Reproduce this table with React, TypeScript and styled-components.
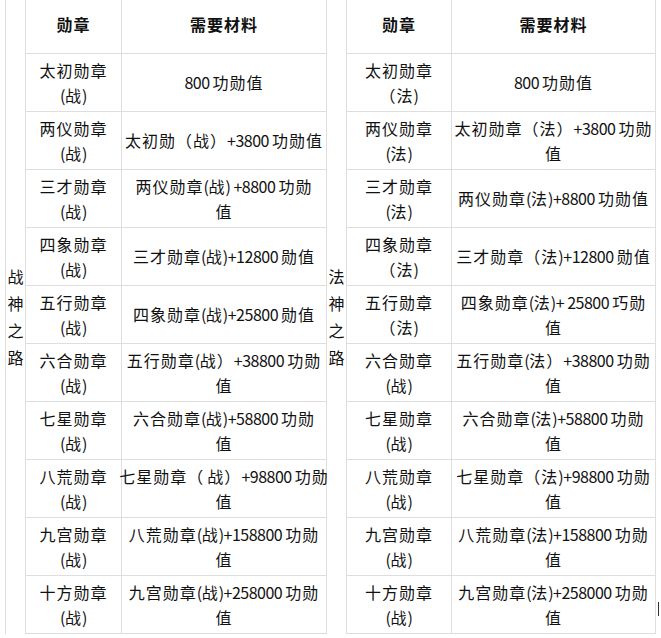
import React from "react";
import styled, { createGlobalStyle } from "styled-components";

const Global = createGlobalStyle`
  html, body { margin: 0; padding: 0; background: #fff; }
  body {
    font-family: "Noto Sans CJK SC", "Noto Sans", sans-serif;
    color: #111;
    overflow: hidden;
  }
`;

const Page = styled.div`
  position: relative;
  width: 661px;
  height: 638px;
  overflow: hidden;
`;

const Grid = styled.div`
  display: grid;
  grid-template-columns: 20px 96px 205px 20px 105px 204px;
  grid-template-rows: 54px repeat(10, 58px);
  width: max-content;
  margin: -1px 0 0 5px;
  border-left: 1px solid #dedede;
  border-top: 1px solid #dedede;
`;

const Cell = styled.div<{ $head?: boolean }>`
  border-right: 1px solid #dedede;
  border-bottom: 1px solid #dedede;
  display: flex;
  align-items: center;
  justify-content: center;
  text-align: center;
  font-size: 16px;
  line-height: 25px;
  letter-spacing: 1px;
  white-space: nowrap;
  font-weight: ${(p) => (p.$head ? 700 : 400)};
  padding-bottom: ${(p) => (p.$head ? "4px" : "0")};
  overflow: visible;
`;

const Latin = styled.span`
  letter-spacing: -0.5px;
`;

const Side = styled.div<{ $col: number }>`
  grid-column: ${(p) => p.$col};
  grid-row: 1 / span 11;
  border-right: 1px solid #dedede;
  display: flex;
  flex-direction: column;
  align-items: center;
  justify-content: center;
  font-size: 16px;
  line-height: 27px;
`;

const Caret = styled.div`
  position: absolute;
  left: 658px;
  top: 602px;
  width: 1px;
  height: 14px;
  background: #333;
`;

type Row = { medal: [string, string]; need: string[] };

const left: Row[] = [
  { medal: ["太初勋章", "(战)"], need: ["800 功勋值"] },
  { medal: ["两仪勋章", "(战)"], need: ["太初勋（战）+3800 功勋值"] },
  { medal: ["三才勋章", "(战)"], need: ["两仪勋章(战) +8800 功勋", "值"] },
  { medal: ["四象勋章", "(战)"], need: ["三才勋章(战)+12800 勋值"] },
  { medal: ["五行勋章", "(战)"], need: ["四象勋章(战)+25800 勋值"] },
  { medal: ["六合勋章", "(战)"], need: ["五行勋章(战）+38800 功勋", "值"] },
  { medal: ["七星勋章", "(战)"], need: ["六合勋章(战)+58800 功勋", "值"] },
  { medal: ["八荒勋章", "(战)"], need: ["七星勋章（ 战）+98800 功勋", "值"] },
  { medal: ["九宫勋章", "(战)"], need: ["八荒勋章(战)+158800 功勋", "值"] },
  { medal: ["十方勋章", "(战)"], need: ["九宫勋章(战)+258000 功勋", "值"] },
];

const right: Row[] = [
  { medal: ["太初勋章", "（法)"], need: ["800 功勋值"] },
  { medal: ["两仪勋章", "(法)"], need: ["太初勋章（法）+3800 功勋", "值"] },
  { medal: ["三才勋章", "(法)"], need: ["两仪勋章(法)+8800 功勋值"] },
  { medal: ["四象勋章", "（法)"], need: ["三才勋章（法)+12800 勋值"] },
  { medal: ["五行勋章", "（法)"], need: ["四象勋章(法)+ 25800 巧勋", "值"] },
  { medal: ["六合勋章", "(战)"], need: ["五行勋章(法）+38800 功勋", "值"] },
  { medal: ["七星勋章", "(战)"], need: ["六合勋章(法)+58800 功勋", "值"] },
  { medal: ["八荒勋章", "(战)"], need: ["七星勋章（法)+98800 功勋", "值"] },
  { medal: ["九宫勋章", "(战)"], need: ["八荒勋章(法)+158800 功勋", "值"] },
  { medal: ["十方勋章", "(战)"], need: ["九宫勋章(法)+258000 功勋", "值"] },
];

const Text = ({ s }: { s: string }) => {
  const parts = s.match(/[\x00-\x7F]+|[^\x00-\x7F]+/g) || [];
  return (
    <>
      {parts.map((p, i) =>
        /^[\x00-\x7F]+$/.test(p) ? <Latin key={i}>{p}</Latin> : <React.Fragment key={i}>{p}</React.Fragment>
      )}
    </>
  );
};

const Lines = ({ lines }: { lines: string[] }) => (
  <span>
    {lines.map((l, i) => (
      <React.Fragment key={i}>
        {i > 0 && <br />}
        <Text s={l} />
      </React.Fragment>
    ))}
  </span>
);

const Half = ({ rows, col, label }: { rows: Row[]; col: number; label: string }) => (
  <>
    <Side $col={col}>
      {label.split("").map((c, i) => (
        <span key={i}>{c}</span>
      ))}
    </Side>
    <Cell $head style={{ gridColumn: col + 1, gridRow: 1 }}>勋章</Cell>
    <Cell $head style={{ gridColumn: col + 2, gridRow: 1 }}>需要材料</Cell>
    {rows.map((r, i) => (
      <React.Fragment key={i}>
        <Cell style={{ gridColumn: col + 1, gridRow: i + 2 }}>
          <Lines lines={r.medal} />
        </Cell>
        <Cell style={{ gridColumn: col + 2, gridRow: i + 2 }}>
          <Lines lines={r.need} />
        </Cell>
      </React.Fragment>
    ))}
  </>
);

export default function App() {
  return (
    <Page>
      <Global />
      <Grid>
        <Half rows={left} col={1} label="战神之路" />
        <Half rows={right} col={4} label="法神之路" />
      </Grid>
      <Caret />
    </Page>
  );
}
